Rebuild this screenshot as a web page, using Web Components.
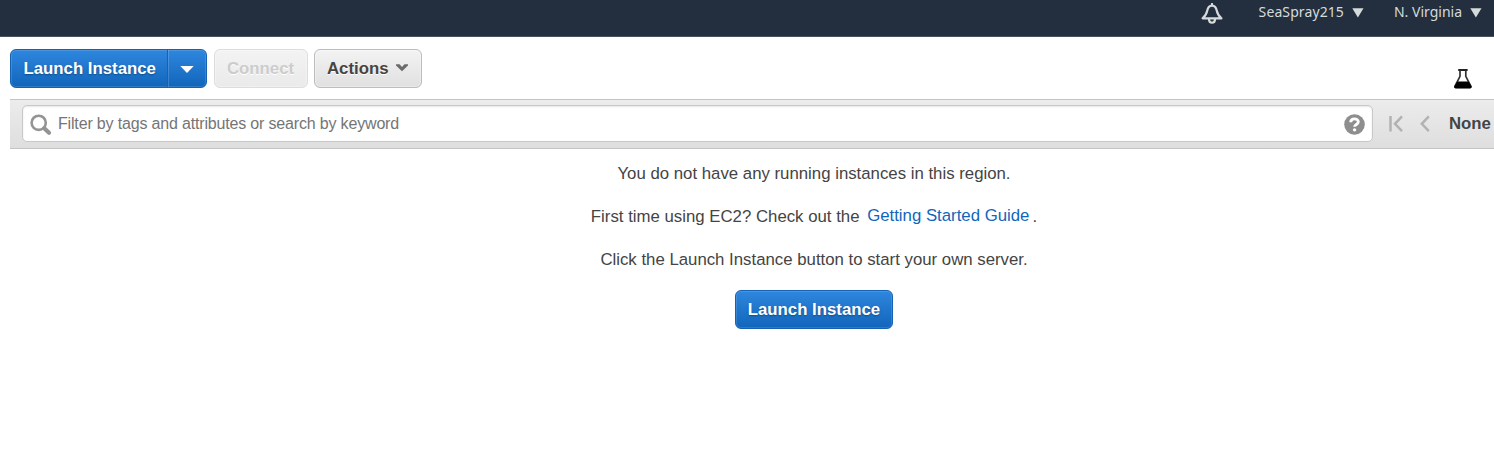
<!DOCTYPE html>
<html lang="en">
<head>
<meta charset="utf-8">
<title>EC2 Instances</title>
<style>
html,body{margin:0;height:100%;overflow:hidden;background:#fff}
body{font-family:"Liberation Sans",Arial,sans-serif;font-size:16.8px;color:#444}
</style>
</head>
<body>
<ec2-page></ec2-page>
<script>
const define = (name, html) => customElements.define(name, class extends HTMLElement {
  constructor() {
    super();
    this.attachShadow({mode: 'open'}).innerHTML = html;
  }
});

define('nav-menu', `
<style>
:host{display:flex;align-items:center;gap:8px;white-space:nowrap}
svg{display:block;width:12px;height:10px;margin-top:1px}
</style>
<span><slot></slot></span>
<svg viewBox="0 0 12 10"><path d="M.3 .3H11.5L5.9 9.6Z" fill="#d5dbdb"/></svg>`);

define('top-nav', `
<style>
:host{display:flex;box-sizing:border-box;height:37px;background:#232f3e;border-bottom:1px solid #485260;
 justify-content:flex-end;align-items:flex-start;padding-right:12px;color:#d5dbdb;font:14px/24px "Noto Sans",sans-serif}
.bell{width:22px;height:22px;margin:3px 36px 0 0}
nav-menu:first-of-type{letter-spacing:.1px}
nav-menu+nav-menu{margin-left:30px}
</style>
<svg class="bell" viewBox="0 0 22 22" fill="none" stroke="#d5dbdb" stroke-width="2.2" stroke-linejoin="round" stroke-linecap="round"><path d="M1.6 15.4H20.4C17.4 12.8 16.4 11 15.8 7.8C15.2 4.6 13.4 2.6 11 2.6S6.8 4.6 6.2 7.8C5.6 11 4.6 12.8 1.6 15.4Z"/><path d="M11 1V2M8 16.2C8 20.9 14 20.9 14 16.2"/></svg>
<nav-menu>SeaSpray215</nav-menu><nav-menu>N. Virginia</nav-menu>`);

define('primary-button', `
<style>
:host{display:inline-flex;box-sizing:border-box;height:39px;border:1px solid #1561b3;border-radius:6px;
 background:linear-gradient(#2f86de,#1166bb);box-shadow:inset 0 0 0 1px rgba(255,255,255,.13);color:#fff;
 font-weight:bold;line-height:37px;white-space:nowrap;text-shadow:0 1px 2px rgba(0,0,0,.35)}
.label{padding:0 12px}
.drop{display:none}
:host([split]) .label{padding:0 11.5px 0 12.5px}
:host([split]) .drop{display:flex;box-sizing:border-box;width:39px;border-left:1px solid #1561b3;box-shadow:inset 1px 0 rgba(255,255,255,.16);align-items:center;justify-content:center}
svg{width:14px;height:7px;margin-top:2px}
</style>
<span class="label"><slot></slot></span>
<span class="drop"><svg viewBox="0 0 14 7"><path d="M.3 0H13.7L7 7Z" fill="#fff"/></svg></span>`);

define('plain-button', `
<style>
:host{display:inline-flex;box-sizing:border-box;height:39px;align-items:center;border:1px solid #bcbcbc;border-radius:6px;
 padding:0 12px;background:linear-gradient(#f3f3f3,#e0e0e0);box-shadow:inset 0 0 0 1px rgba(255,255,255,.3);
 color:#444;font-weight:bold;line-height:37px;white-space:nowrap;text-shadow:0 1px #fff}
:host([disabled]){color:#ccc;border-color:#dcdcdc;background:linear-gradient(#f3f3f3,#eaeaea)}
svg{display:none;width:14px;height:9px;margin-left:6px;margin-top:-3px}
:host([menu]) svg{display:block}
</style>
<slot></slot><svg viewBox="0 0 14 9"><path d="M1 1.3H4.5L7 4L9.5 1.3H13V2.5L7 8.3L1 2.5Z" fill="#6b6b6b"/></svg>`);

define('action-bar', `
<style>
:host{display:flex;height:62px;box-sizing:border-box;padding:12px 21px 0 10px;align-items:flex-start}
primary-button{width:197px;box-sizing:border-box;margin-right:7px}
.connect{width:94px;margin-right:6px}.actions{width:108px}
.flask{width:20px;height:21px;margin:19px 0 0 auto}
</style>
<primary-button split>Launch Instance</primary-button>
<plain-button class="connect" disabled>Connect</plain-button>
<plain-button class="actions" menu>Actions</plain-button>
<svg class="flask" viewBox="0 0 20 21"><path d="M5.2 2H14.6" stroke="#222" stroke-width="2"/><path d="M7 2.5V8.4L2.1 17.8Q1.4 19.6 3 19.6H16.8Q18.4 19.6 17.7 17.8L12.8 8.4V2.5" fill="none" stroke="#333" stroke-width="1.7"/><path d="M4.4 13.6H15.4L18.4 18.2Q19 20.3 17.2 20.3H2.6Q.8 20.3 1.4 18.2Z" fill="#000"/></svg>`);

define('search-box', `
<style>
:host{display:flex;box-sizing:border-box;width:1351px;height:37px;border:1px solid #c8c8c8;border-radius:5px;background:#fff;
 box-shadow:inset 0 1px 2px rgba(0,0,0,.1);align-items:center;color:#757575;font-size:16px;line-height:35px;letter-spacing:-.17px}
.lens{width:22px;height:22px;margin:3px 6px 0 7px}
.help{width:21px;height:21px;margin:2px 7px 0 auto}
</style>
<svg class="lens" viewBox="0 0 22 22" fill="none" stroke="#949494"><circle cx="8.7" cy="8.8" r="7.1" stroke-width="2.6"/><path d="M14.2 14.2L19 18.8" stroke-width="4.2" stroke-linecap="round"/></svg>
<span><slot></slot></span>
<svg class="help" viewBox="0 0 22 22"><circle cx="11" cy="11" r="10.8" fill="#8e8e8e"/><path d="M7 8.6C7.1 4.1 15 4.1 15 8.2C15 11 11.1 10.8 11.1 13.3" fill="none" stroke="#fff" stroke-width="3"/><circle cx="11.1" cy="16.6" r="1.8" fill="#fff"/></svg>`);

define('filter-bar', `
<style>
:host{display:flex;box-sizing:border-box;height:50px;margin-left:10px;padding-left:12px;align-items:center;
 background:linear-gradient(#ececec,#dedede);border-top:1px solid #c4c4c4;border-bottom:1px solid #c4c4c4;overflow:hidden}
search-box{flex:none;margin-bottom:1px}
svg{flex:none;height:18px}
.first{width:16px;margin-left:15px}.prev{width:12px;margin-left:15px}
b{margin-left:18px;white-space:nowrap;color:#444}
</style>
<search-box>Filter by tags and attributes or search by keyword</search-box>
<svg class="first" viewBox="0 0 16 18" fill="none" stroke="#b2b2b2" stroke-width="2.5"><path d="M2.5 1V16.6M14 1.4L7 8.8L14 16.2"/></svg>
<svg class="prev" viewBox="0 0 12 18" fill="none" stroke="#b2b2b2" stroke-width="2.5"><path d="M9.8 1.4L2.8 8.8L9.8 16.2"/></svg>
<b>None</b>`);

define('empty-state', `
<style>
:host{display:flex;flex-direction:column;align-items:center;margin-left:134px;padding-top:15px;line-height:20px}
p{margin:0 0 23px;white-space:nowrap}
p:last-of-type{margin-bottom:20px}
a{color:#1166bb;text-decoration:none;margin:0 3px;position:relative;top:-1px}
</style>
<p>You do not have any running instances in this region.</p>
<p>First time using EC2? Check out the <a>Getting Started Guide</a>.</p>
<p>Click the Launch Instance button to start your own server.</p>
<primary-button>Launch Instance</primary-button>`);

define('ec2-page', `
<style>:host{display:block}</style>
<top-nav></top-nav><action-bar></action-bar><filter-bar></filter-bar><empty-state></empty-state>`);
</script>
</body>
</html>
